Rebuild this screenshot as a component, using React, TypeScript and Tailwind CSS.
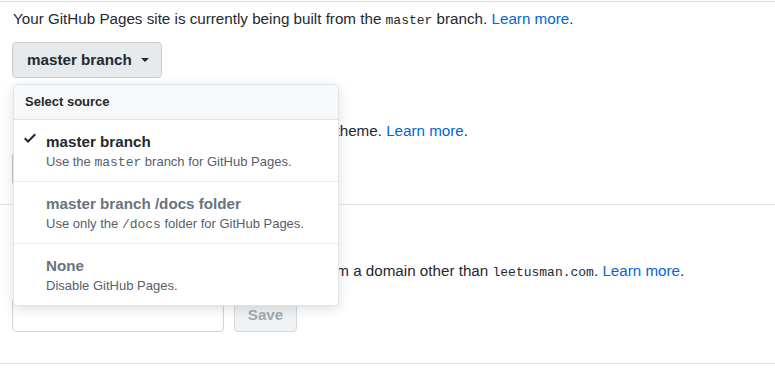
import { useState } from "react";

type Source = {
  title: string;
  before: string;
  code: string;
  after: string;
  selected?: boolean;
};

const sources: Source[] = [
  { title: "master branch", before: "Use the ", code: "master", after: " branch for GitHub Pages.", selected: true },
  { title: "master branch /docs folder", before: "Use only the ", code: "/docs", after: " folder for GitHub Pages." },
  { title: "None", before: "Disable GitHub Pages.", code: "", after: "" },
];

const Check = () => (
  <svg width="12" height="16" viewBox="0 0 12 16" className="fill-[#24292e]">
    <path d="M12 5l-8 8-4-4 1.5-1.5L4 10l6.5-6.5L12 5z" />
  </svg>
);

const Caret = () => (
  <span className="ml-[9px] inline-block h-0 w-0 border-x-[4px] border-t-[4px] border-x-transparent border-t-[#24292e]" />
);

const Mono = ({ children }: { children: React.ReactNode }) => (
  <code className="font-['Liberation_Mono',monospace] text-[13px] leading-none">{children}</code>
);

const App = () => {
  const [open] = useState(true);

  return (
    <div className="min-h-[374px] bg-white pt-px font-['Liberation_Sans',Arial,sans-serif] text-[15.2px] leading-[22px] text-[#24292e]">
      <div className="border-t border-[#d9dcdf]">
        {/* Source */}
        <div className="border-b border-[#e1e4e8] px-[12px] pb-[18px] pt-[6px]">
          <p className="pl-px">
            Your GitHub Pages site is currently being built from the <Mono>master</Mono> branch.{" "}
            <a className="text-[#0366d6]" href="#">Learn more</a>.
          </p>

          <div className="relative mt-[12px]">
            <button className="flex h-[36px] items-center rounded-[4px] border border-[#c9ccd0] bg-[#e6eaed] pl-[14px] pr-[12px] font-bold text-[#24292e]">
              master branch
              <Caret />
            </button>

            {open && (
              <div className="absolute left-px top-[42px] z-10 w-[326px] overflow-hidden rounded-[4px] border border-[#e1e4e8] bg-white shadow-[0_3px_12px_rgba(27,31,35,0.15)]">
                <div className="flex h-[35px] items-center border-b border-[#e1e4e8] bg-[#f6f8fa] px-[11px] text-[13px] font-bold">
                  Select source
                </div>
                {sources.map((s, i) => (
                  <div
                    key={s.title}
                    className={`flex items-start pl-[10px] pt-[11px] ${i < sources.length - 1 ? "h-[62px] border-b border-[#eaecef]" : "h-[61px]"}`}
                  >
                    <div className="-mt-px mr-[10px] w-[12px]">{s.selected && <Check />}</div>
                    <div>
                      <div className={`font-bold leading-[21px] ${s.selected ? "text-[#24292e]" : "text-[#6a737d]"}`}>{s.title}</div>
                      <div className="mt-px text-[13px] leading-[18px] text-[#586069]">
                        {s.before}
                        {s.code && <Mono>{s.code}</Mono>}
                        {s.after}
                      </div>
                    </div>
                  </div>
                ))}
              </div>
            )}
          </div>

          {/* Theme chooser */}
          <p className="mt-[42px] pl-px">
            Select a theme to publish your site with a Jekyll theme.{" "}
            <a className="text-[#0366d6]" href="#">Learn more</a>.
          </p>
          <button className="mt-[10px] h-[34px] rounded-[4px] border border-[#c9ccd0] bg-[#eff3f6] px-[12px] font-bold">
            Choose a theme
          </button>
        </div>

        {/* Custom domain */}
        <div className="border-b border-[#e1e4e8] px-[12px] pb-[31px] pt-[55px]">
          <p className="pl-px">
            Custom domains allow you to serve your site from a domain other than <Mono>leetusman.com</Mono>.{" "}
            <a className="text-[#0366d6]" href="#">Learn more</a>.
          </p>
          <div className="mt-[16px] flex gap-[10px]">
            <input className="h-[34px] w-[212px] rounded-[4px] border border-[#d1d5da] px-[8px] shadow-[inset_0_1px_2px_rgba(27,31,35,0.075)]" />
            <button
              disabled
              className="h-[34px] w-[63px] rounded-[4px] border border-[#d5d8db] bg-[#eff3f6] font-bold text-[#a3a9ae]"
            >
              Save
            </button>
          </div>
        </div>
      </div>
    </div>
  );
};

export default App;
